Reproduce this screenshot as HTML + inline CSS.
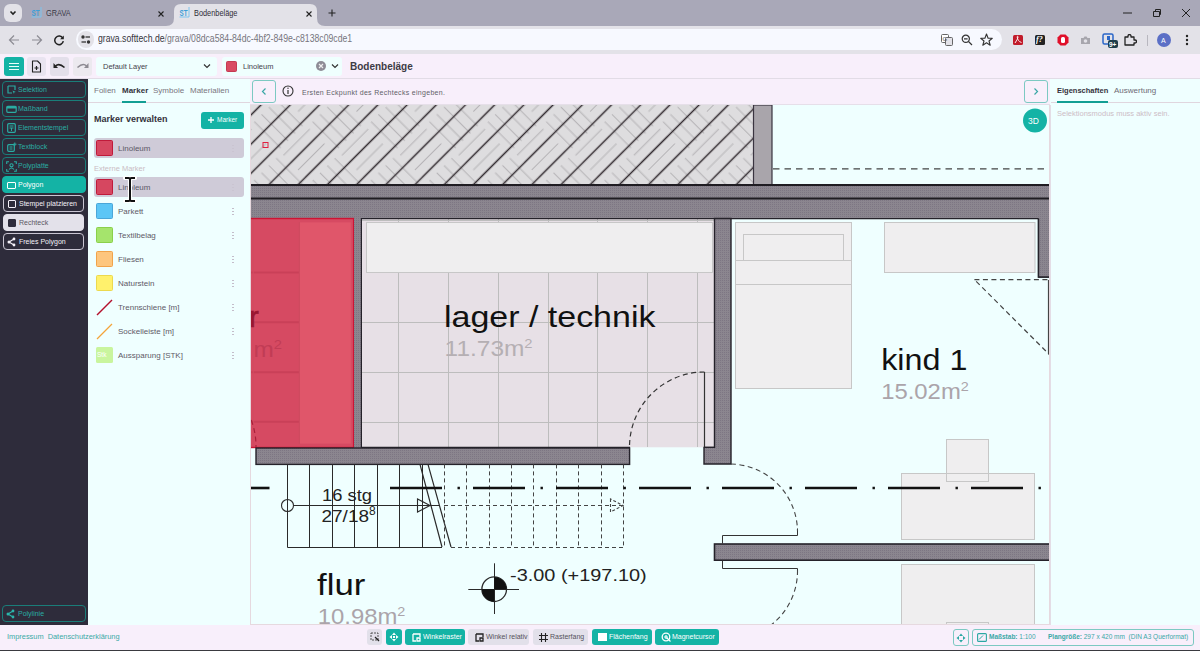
<!DOCTYPE html>
<html><head><meta charset="utf-8">
<style>
*{box-sizing:border-box;margin:0;padding:0}
html,body{width:1200px;height:651px;overflow:hidden;background:#efffff;font-family:"Liberation Sans",sans-serif;position:relative}
.a{position:absolute}
.t{position:absolute;white-space:nowrap;line-height:1}
/* chrome */
#tabs{left:0;top:0;width:1200px;height:26px;background:#a9a8b8}
#addr{left:0;top:26px;width:1200px;height:28px;background:#e3e2e8}
#tool{left:0;top:54px;width:1200px;height:25px;background:#f8effb;border-bottom:1px solid #e2dce6}
#side{left:0;top:79px;width:88px;height:546px;background:#2e2c3b}
#panel{left:88px;top:79px;width:162px;height:546px;background:#efffff}
#info{left:250px;top:79px;width:800px;height:26px;background:#f8effb;border-bottom:1px solid #e6dfe9}
#right{left:1050px;top:79px;width:150px;height:546px;background:#efffff}
#status{left:0;top:625px;width:1200px;height:25px;background:#f8effb}
#bot{left:0;top:650px;width:1200px;height:1px;background:#3a3a40}
.sb{position:absolute;left:2px;width:84px;height:17px;border:1px solid #1a7d79;border-radius:4px;color:#2aaca3;font-size:7px}
.sb span{position:absolute;left:15px;top:4px;white-space:nowrap}
.sb i{position:absolute;left:4px;top:4px;width:8px;height:8px;border:1.3px solid #2bb5aa;border-radius:1px}
.sub{left:3px;width:81px;border-color:#c9c5d2;color:#f4f0f8}
.sub i{border-color:#f4f0f8}
.row{position:absolute;left:94px;width:150px;height:20px}
.sw{position:absolute;left:2px;top:2px;width:17px;height:16px;border-radius:1.5px}
.row span{position:absolute;left:24px;top:6px;font-size:8px;color:#5e5a66;white-space:nowrap}
.dots{position:absolute;left:138px;top:6px;width:2px;height:9px;background:radial-gradient(circle,#c4bdca 0.75px,transparent 0.95px) 0 0/2px 3px}
.btn{position:absolute;top:629px;height:16px;border-radius:3px;font-size:7px;white-space:nowrap}
.btn span{position:absolute;top:4px}
.teal{background:#14b3a5;color:#fff}
.gray{background:#e2e0ea;color:#55525c}
</style></head><body>
<div id="tabs" class="a"></div>
<div id="addr" class="a"></div>
<div id="tool" class="a"></div>
<div id="side" class="a"></div>
<div id="panel" class="a"></div>
<div id="info" class="a"></div>
<div id="right" class="a"></div>
<div id="status" class="a"></div>
<div id="bot" class="a"></div>





<!-- canvas -->
<svg class="a" style="left:250px;top:105px" width="800" height="520" viewBox="250 105 800 520">
<defs>
<pattern id="pq" patternUnits="userSpaceOnUse" width="82.60" height="82.60" patternTransform="rotate(-45) translate(6,16)">
<rect width="82.60" height="82.60" fill="#dedddf"/>
<path d="M5.16 2.00V39.30M15.49 2.00V39.30M25.81 2.00V39.30M36.14 2.00V39.30M46.46 43.30V80.60M56.79 43.30V80.60M67.11 43.30V80.60M77.44 43.30V80.60M43.30 5.16H80.60M43.30 15.49H80.60M43.30 25.81H80.60M43.30 36.14H80.60M2.00 46.46H39.30M2.00 56.79H39.30M2.00 67.11H39.30M2.00 77.44H39.30" stroke="#b5b3b6" stroke-width="1"/>
</pattern>
<pattern id="dk" patternUnits="userSpaceOnUse" width="41.30" height="20.65" patternTransform="rotate(-45) translate(0,0.635)">
<path d="M-1 10.325H42.30" stroke="#362f34" stroke-width="1.5"/>
</pattern>
<pattern id="wl" patternUnits="userSpaceOnUse" width="2" height="2"><rect width="2" height="2" fill="#8b868f"/><rect width="1" height="1" fill="#7d7683"/></pattern>
</defs>
<!-- hatched top -->
<rect x="250" y="105" width="503.5" height="80" fill="url(#pq)"/><rect x="250" y="105" width="503.5" height="80" fill="url(#dk)"/>
<rect x="753.5" y="105" width="18.5" height="80" fill="#a9a5ab" stroke="#3a3440" stroke-width="1.2"/>
<path d="M773 168.8H1050" stroke="#444" stroke-width="1.3" stroke-dasharray="6.5 5"/>
<!-- top walls -->
<rect x="250" y="185" width="800" height="13" fill="url(#wl)"/>
<rect x="250" y="198.5" width="800" height="19.5" fill="url(#wl)"/>
<path d="M250 185H1050M250 198.5H1050" stroke="#1f1c22" stroke-width="2"/>
<!-- red room -->
<rect x="250" y="218" width="104" height="229.5" fill="#d64a62"/>
<rect x="299.6" y="222.4" width="51.2" height="221.2" fill="#e0566a"/>
<path d="M250 272.5H299M250 322.2H299M250 372.2H299M250 421.8H299" stroke="#c94058" stroke-width="2"/><path d="M253.2 218V447" stroke="#d24a60" stroke-width="1"/><path d="M251.2 420A74 74 0 0 1 256 447" stroke="#a8203a" stroke-width="1.2" fill="none" stroke-dasharray="5 3.5"/>
<path d="M299.3 222V444" stroke="#cc4a5e" stroke-width="1"/>
<rect x="250" y="218.5" width="103.6" height="229" fill="none" stroke="#cc1434" stroke-width="1.4"/>
<text x="249" y="326.8" font-family="Liberation Sans" font-size="29.5" fill="#9a1631" stroke="#9a1631" stroke-width="0.6">r</text>
<text x="253.4" y="356.5" font-family="Liberation Sans" font-size="21.5" fill="#c13c55" textLength="28.5" lengthAdjust="spacingAndGlyphs">m<tspan font-size="13" dy="-8">2</tspan></text>
<!-- wall between red and lager -->
<rect x="354" y="218" width="7.5" height="230" fill="url(#wl)"/>
<path d="M361.5 218V448" stroke="#25222a" stroke-width="1.3"/>
<!-- lager room -->
<rect x="362" y="218.8" width="352" height="228.5" fill="#e7e0e6"/>
<path d="M398.5 219V447M448.5 219V447M498.5 219V447M548.5 219V447M597.5 219V447M647.5 219V447M697.5 219V447M362 322.5H714M362 372.5H714M362 422.5H714M362 220.5H714" stroke="#bdbdbd" stroke-width="1"/>
<rect x="366.5" y="222.5" width="346" height="50" fill="#efeeef" stroke="#c7c7c7" stroke-width="1"/>
<path d="M362 218.6H714M362 447.4H630M704 447.4H714" stroke="#25222a" stroke-width="1.4"/>
<text x="444" y="326.6" font-family="Liberation Sans" font-size="29.5" fill="#111" textLength="211.4" lengthAdjust="spacingAndGlyphs">lager / technik</text>
<text x="444.6" y="356.3" font-family="Liberation Sans" font-size="21.5" fill="#b5afb3" textLength="88" lengthAdjust="spacingAndGlyphs">11.73m<tspan font-size="13" dy="-8">2</tspan></text>
<!-- lager door -->
<path d="M704.5 372V447" stroke="#333" stroke-width="1.2"/>
<path d="M704.5 372A75 75 0 0 0 629.5 447" stroke="#333" stroke-width="1.2" fill="none" stroke-dasharray="5 3.5"/>
<!-- right lager wall -->
<path d="M714.5 218.5H731V464H704V447.4H714.5Z" fill="url(#wl)" stroke="#25222a" stroke-width="1.4"/>
<!-- bottom lager wall -->
<rect x="256" y="448" width="373.6" height="16.4" fill="url(#wl)" stroke="#25222a" stroke-width="1.4"/>
<!-- kind 1 -->
<path d="M731 218.6H1038.5V277H1050" stroke="#25222a" stroke-width="1.4" fill="none"/>
<rect x="1038.5" y="218" width="11.5" height="59" fill="url(#wl)"/>
<path d="M1038.5 218.6V277H1050" stroke="#25222a" stroke-width="1.4" fill="none"/>
<rect x="735.5" y="222.5" width="116" height="166" fill="#efeeef" stroke="#c7c7c7" stroke-width="1"/>
<rect x="743.5" y="234.5" width="100" height="26" fill="#efeeef" stroke="#c7c7c7" stroke-width="1"/>
<path d="M735.5 260.5H851.5M735.5 284.5H851.5" stroke="#c7c7c7" stroke-width="1"/>
<rect x="884.5" y="222.5" width="150.5" height="50" fill="#efeeef" stroke="#c7c7c7" stroke-width="1"/>
<path d="M974.4 279.6H1048.8L1048.8 354Z" stroke="#444" stroke-width="1.2" fill="none" stroke-dasharray="5 3.5"/>
<path d="M1048.5 280V354" stroke="#444" stroke-width="1.2"/>
<text x="881.2" y="370.1" font-family="Liberation Sans" font-size="29.5" fill="#111" textLength="86.2" lengthAdjust="spacingAndGlyphs">kind 1</text>
<text x="881.2" y="399.3" font-family="Liberation Sans" font-size="21.5" fill="#aba4aa" textLength="87.6" lengthAdjust="spacingAndGlyphs">15.02m<tspan font-size="13" dy="-8">2</tspan></text>
<rect x="946.5" y="439.5" width="42" height="42" fill="#efeeef"/>
<rect x="901.5" y="473.5" width="133" height="66" fill="#efeeef" stroke="#c7c7c7" stroke-width="1"/>
<rect x="946.5" y="439.5" width="42" height="42" fill="none" stroke="#c7c7c7" stroke-width="1"/>
<rect x="901.5" y="564.5" width="133" height="70" fill="#efeeef" stroke="#c7c7c7" stroke-width="1"/>
<rect x="946.5" y="622.5" width="42" height="10" fill="#efeeef" stroke="#c7c7c7" stroke-width="1"/>
<!-- horizontal wall bottom right -->
<rect x="714.5" y="544" width="340" height="16.2" fill="url(#wl)" stroke="#25222a" stroke-width="1.6"/>
<path d="M722.5 543.5V535.5H797.5V528.5M722.5 560.5V568.5H797.5V572" stroke="#333" stroke-width="1" fill="none"/>
<path d="M731 464A68 68 0 0 1 797.5 531" stroke="#444" stroke-width="1.1" fill="none" stroke-dasharray="5 3.5"/>
<path d="M797.5 570A68 68 0 0 1 771 625" stroke="#444" stroke-width="1.1" fill="none" stroke-dasharray="5 3.5"/>
<!-- stairs -->
<path d="M287.5 464.4V547.5H442M309.5 464.4V547M332.5 464.4V547M354.5 464.4V547M377.5 464.4V547M399.5 464.4V547M422.5 464.4V547" stroke="#2a2a2a" stroke-width="1" fill="none"/>
<path d="M420 464.4L442 547M428 464.4L451 547" stroke="#2a2a2a" stroke-width="1.2" fill="none"/>
<path d="M444.5 464.4V547M466.5 464.4V547M489.5 464.4V547M511.5 464.4V547M533.5 464.4V547M556.5 464.4V547M578.5 464.4V547M601.5 464.4V547M623.5 464.4V547M451 547.5H623.5M444 505.5H623.5" stroke="#444" stroke-width="1" fill="none" stroke-dasharray="4 3"/>
<path d="M293.5 505.5H440" stroke="#2a2a2a" stroke-width="1"/>
<circle cx="287.5" cy="505.5" r="6" stroke="#2a2a2a" stroke-width="1.1" fill="none"/>
<path d="M417.5 499V512L430 505.5Z" stroke="#2a2a2a" stroke-width="1.1" fill="none"/>
<path d="M610.5 499V512L623 505.5Z" stroke="#444" stroke-width="1.1" fill="none" stroke-dasharray="3 2"/>
<text x="322" y="501" font-family="Liberation Sans" font-size="16" fill="#222" textLength="50" lengthAdjust="spacingAndGlyphs">16 stg</text>
<text x="321.5" y="521.5" font-family="Liberation Sans" font-size="16" fill="#222" textLength="47.5" lengthAdjust="spacingAndGlyphs">27/18</text>
<text x="369" y="515" font-family="Liberation Sans" font-size="12" fill="#222">8</text>
<!-- dash-dot axis -->
<path d="M250 488H269.5" stroke="#111" stroke-width="2.6"/><path d="M390 488H1050" stroke="#111" stroke-width="2.6" stroke-dasharray="52 15.5 2.4 13.1"/>
<!-- elevation -->
<path d="M468.3 589.5H519M494.5 563.3V614" stroke="#2a2a2a" stroke-width="1"/>
<circle cx="494.2" cy="589.2" r="12.3" stroke="#2a2a2a" stroke-width="1.3" fill="none"/>
<path d="M494.2 589.2V576.9A12.3 12.3 0 0 1 506.5 589.2Z M494.2 589.2V601.5A12.3 12.3 0 0 1 481.9 589.2Z" fill="#111"/>
<text x="510" y="580.8" font-family="Liberation Sans" font-size="16.5" fill="#222" textLength="136.7" lengthAdjust="spacingAndGlyphs">-3.00 (+197.10)</text>
<text x="317" y="594.5" font-family="Liberation Sans" font-size="29.5" fill="#111" textLength="48.3" lengthAdjust="spacingAndGlyphs">flur</text>
<text x="317.7" y="623.9" font-family="Liberation Sans" font-size="21.5" fill="#aba4aa" textLength="87.7" lengthAdjust="spacingAndGlyphs">10.98m<tspan font-size="13" dy="-8">2</tspan></text>
<!-- small red marker -->
<rect x="263" y="142.5" width="5" height="5" fill="none" stroke="#e02040" stroke-width="1"/>
<!-- canvas border -->
<path d="M1049.5 105V625M250 624.5H1050M250.5 105V625" stroke="#e6d9df" stroke-width="1"/>
<!-- 3D button -->
<circle cx="1035" cy="120.4" r="12" fill="#14b3a5"/>
<text x="1028" y="124" font-family="Liberation Sans" font-size="8.5" fill="#fff">3D</text>
</svg>

<!-- info bar -->
<div class="a" style="left:252px;top:80px;width:24px;height:23px;border-radius:3px;border:1px solid #7cc9c2;background:#f8effb"></div>
<svg class="a" style="left:260px;top:87px" width="8" height="9"><path d="M5.5 1.5L2.5 4.5L5.5 7.5" stroke="#3aa7a6" stroke-width="1.2" fill="none"/></svg>
<svg class="a" style="left:282px;top:85px" width="12" height="12"><circle cx="6" cy="6" r="5" stroke="#333" stroke-width="1.1" fill="none"/><path d="M6 5V9" stroke="#333" stroke-width="1.2"/><circle cx="6" cy="3.3" r="0.7" fill="#333"/></svg>
<div class="t" style="left:302px;top:89px;font-size:7px;letter-spacing:0.3px;color:#625f69">Ersten Eckpunkt des Rechtecks eingeben.</div>
<div class="a" style="left:1024px;top:80px;width:24px;height:23px;border-radius:3px;border:1px solid #7cc9c2;background:#f8effb"></div>
<svg class="a" style="left:1032px;top:87px" width="8" height="9"><path d="M2.5 1.5L5.5 4.5L2.5 7.5" stroke="#3aa7a6" stroke-width="1.2" fill="none"/></svg>
<!-- right panel -->
<div class="a" style="left:1050px;top:105px;width:1px;height:520px;background:#e4dde6"></div>
<div class="t" style="left:1057px;top:87px;font-size:7.5px;color:#35323c;font-weight:bold">Eigenschaften</div>
<div class="t" style="left:1114px;top:87px;font-size:8px;color:#6e6a75">Auswertung</div>
<div class="a" style="left:1051px;top:102px;width:149px;height:1px;background:#e0d6de"></div>
<div class="a" style="left:1057px;top:101px;width:51px;height:2px;background:#139e93"></div>
<div class="t" style="left:1057px;top:110px;font-size:7.5px;color:#cdbdc6">Selektionsmodus muss aktiv sein.</div>
<!-- status bar -->
<div class="t" style="left:7px;top:633px;font-size:7.4px;color:#3aaaa6">Impressum&nbsp; Datenschutzerklärung</div>
<div class="btn gray" style="left:367px;width:15px"><svg class="a" style="left:3px;top:3px" width="10" height="10"><path d="M1 1H8V8H1Z" stroke="#444" stroke-width="0.9" fill="none" stroke-dasharray="2 1"/><path d="M5 5L9 9" stroke="#222" stroke-width="1.2"/></svg></div>
<div class="btn teal" style="left:386px;width:16px"><svg class="a" style="left:3px;top:3px" width="10" height="10"><path d="M5 0.5L7 3H3Z M5 9.5L7 7H3Z M0.5 5L3 3V7Z M9.5 5L7 3V7Z" fill="#fff"/><rect x="4" y="4" width="2" height="2" fill="#fff"/></svg></div>
<div class="btn teal" style="left:405px;width:60px"><svg class="a" style="left:7px;top:4px" width="9" height="9"><path d="M1 1H8V4M1 1V8H4M5 5H8V8H5Z" stroke="#fff" stroke-width="1.3" fill="none"/></svg><span style="left:18px">Winkelraster</span></div>
<div class="btn gray" style="left:468px;width:61px"><svg class="a" style="left:7px;top:4px" width="9" height="9"><path d="M1 1H8V4M1 1V8H4M5 5H8V8H5Z" stroke="#222" stroke-width="1.3" fill="none"/></svg><span style="left:18px">Winkel relativ</span></div>
<div class="btn gray" style="left:533px;width:55px"><svg class="a" style="left:6px;top:4px" width="9" height="9"><path d="M0 2.5H9M0 6.5H9M2.5 0V9M6.5 0V9" stroke="#222" stroke-width="1.1"/></svg><span style="left:17px">Rasterfang</span></div>
<div class="btn teal" style="left:592px;width:60px"><div class="a" style="left:6px;top:4px;width:9px;height:8px;background:#fff"></div><span style="left:17px">Flächenfang</span></div>
<div class="btn teal" style="left:655px;width:64px"><svg class="a" style="left:6px;top:3px" width="10" height="10"><circle cx="5" cy="5" r="3.8" stroke="#fff" stroke-width="1.3" fill="none"/><path d="M5 3V7M3 5H7M6 6L9.5 9.5" stroke="#fff" stroke-width="1.2"/></svg><span style="left:17px">Magnetcursor</span></div>
<div class="a" style="left:953px;top:629px;width:16px;height:17px;border-radius:3px;border:1px solid #7cc9c2"></div>
<svg class="a" style="left:956px;top:633px" width="10" height="10"><path d="M5 0.5L7 3H3Z M5 9.5L7 7H3Z M0.5 5L3 3V7Z M9.5 5L7 3V7Z" fill="#2aa8a3"/></svg>
<div class="a" style="left:972px;top:629px;width:222px;height:17px;border-radius:3px;border:1px solid #7cc9c2"></div>
<svg class="a" style="left:977px;top:633px" width="10" height="9"><rect x="0.6" y="0.6" width="8.8" height="7.8" rx="1" stroke="#2aa8a3" stroke-width="1.1" fill="none"/><path d="M2 6.5L6 2.5" stroke="#2aa8a3" stroke-width="1"/></svg>
<div class="t" style="left:989px;top:634px;font-size:6.5px;color:#3aa8a6"><b>Maßstab:</b>&nbsp;1:100</div>
<div class="t" style="left:1048px;top:634px;font-size:6.5px;color:#3aa8a6"><b>Plangröße:</b>&nbsp;297 x 420 mm&nbsp; (DIN A3 Querformat)</div>

<!-- sidebar -->
<div class="sb" style="top:81px"><svg class="a" style="left:4px;top:3px" width="10" height="10"><path d="M1 1H8V5M1 1V8H5" stroke="#2aaca3" stroke-width="1.2" fill="none"/><path d="M5.5 5.5L9 7L7.3 7.3L7 9Z" fill="#2aaca3"/></svg><span>Selektion</span></div>
<div class="sb" style="top:100px"><svg class="a" style="left:3px;top:4px" width="11" height="9"><rect x="0.8" y="1.3" width="9.4" height="6" rx="1" stroke="#2aaca3" stroke-width="1.2" fill="none"/><rect x="0.8" y="1.3" width="9.4" height="2.2" fill="#2aaca3"/></svg><span>Maßband</span></div>
<div class="sb" style="top:119px"><svg class="a" style="left:4px;top:3px" width="10" height="10"><rect x="0.7" y="0.7" width="7.6" height="8.6" rx="1" stroke="#2aaca3" stroke-width="1.2" fill="none"/><path d="M2.5 3H6.5M2.5 5H6.5M4.5 5V8" stroke="#2aaca3" stroke-width="1"/></svg><span>Elementstempel</span></div>
<div class="sb" style="top:138px"><svg class="a" style="left:4px;top:3px" width="10" height="10"><rect x="0.7" y="2.7" width="6.6" height="6.6" rx="1" stroke="#2aaca3" stroke-width="1.2" fill="none"/><path d="M2.5 5H5.5M2.5 7H5.5M7.8 0.5V4M6 2.2H9.5" stroke="#2aaca3" stroke-width="1"/></svg><span>Textblock</span></div>
<div class="sb" style="top:157px"><svg class="a" style="left:3px;top:3px" width="11" height="11"><path d="M0.7 3V0.7H3M8 0.7H10.3V3M10.3 8V10.3H8M3 10.3H0.7V8" stroke="#2aaca3" stroke-width="1.1" fill="none"/><circle cx="5.5" cy="4.3" r="1.6" stroke="#2aaca3" stroke-width="1.1" fill="none"/><path d="M3 8.5Q5.5 5.5 8 8.5" stroke="#2aaca3" stroke-width="1.1" fill="none"/></svg><span>Polyplatte</span></div>
<div class="sb" style="top:176px;background:#14b3a5;border-color:#14b3a5;color:#fff"><i style="border-color:#fff;width:9px;height:7px;top:5px"></i><span>Polygon</span></div>
<div class="sb sub" style="top:195px"><i style="width:8px;height:8px"></i><span>Stempel platzieren</span></div>
<div class="sb sub" style="top:214px;background:#e3e1ea;border-color:#e3e1ea;color:#5b5864"><i style="background:#2e2c3b;border-color:#2e2c3b"></i><span>Rechteck</span></div>
<div class="sb sub" style="top:233px"><svg class="a" style="left:3px;top:3px" width="9" height="10"><path d="M2 5L7 2M2 5L7 8" stroke="#f4f0f8" stroke-width="1.2"/><circle cx="2" cy="5" r="1.5" fill="#f4f0f8"/><circle cx="7" cy="2" r="1.4" fill="#f4f0f8"/><circle cx="7" cy="8" r="1.4" fill="#f4f0f8"/></svg><span>Freies Polygon</span></div>
<div class="sb" style="top:605px"><svg class="a" style="left:3px;top:3px" width="9" height="10"><path d="M2 5L7 2M2 5L7 8" stroke="#2bb5aa" stroke-width="1.2"/><circle cx="2" cy="5" r="1.5" fill="#2bb5aa"/><circle cx="7" cy="2" r="1.4" fill="#2bb5aa"/><circle cx="7" cy="8" r="1.4" fill="#2bb5aa"/></svg><span>Polylinie</span></div>
<!-- panel -->
<div class="t" style="left:94px;top:87px;font-size:8px;color:#7a7680">Folien</div>
<div class="t" style="left:122px;top:87px;font-size:8px;color:#35323c;font-weight:bold">Marker</div>
<div class="t" style="left:153px;top:87px;font-size:8px;color:#7a7680">Symbole</div>
<div class="t" style="left:190px;top:87px;font-size:8px;color:#7a7680">Materialien</div>
<div class="a" style="left:88px;top:102px;width:162px;height:1px;background:#e0d6de"></div>
<div class="a" style="left:122px;top:101px;width:24px;height:2px;background:#139e93"></div>
<div class="t" style="left:94px;top:115px;font-size:9px;color:#35323c;font-weight:bold">Marker verwalten</div>
<div class="a" style="left:201px;top:112px;width:43px;height:17px;border-radius:3px;background:#14b3a5"></div>
<svg class="a" style="left:207px;top:116px" width="8" height="8"><path d="M4 1V7M1 4H7" stroke="#fff" stroke-width="1.3"/></svg>
<div class="t" style="left:217px;top:117px;font-size:6.5px;color:#f4fffd">Marker</div>
<div class="row" style="top:138px;background:#cfcbd8;border-radius:3px"><div class="sw" style="background:#d64760;border:1px solid #c01a3a"></div><span style="color:#5c5866">Linoleum</span><div class="dots" style="opacity:.5"></div></div>
<div class="t" style="left:94px;top:165px;font-size:7.5px;color:#cbbcc4">Externe Marker</div>
<div class="row" style="top:177px;background:#cfcbd8;border-radius:3px"><div class="sw" style="background:#d64760;border:1px solid #c01a3a"></div><span style="color:#5c5866">Linoleum</span><div class="dots" style="opacity:.5"></div></div>
<div class="row" style="top:201px"><div class="sw" style="background:#5cc6f6;border:1px solid #4aa6d8"></div><span>Parkett</span><div class="dots"></div></div>
<div class="row" style="top:225px"><div class="sw" style="background:#a5e46c;border:1px solid #8ad04a"></div><span>Textilbelag</span><div class="dots"></div></div>
<div class="row" style="top:249px"><div class="sw" style="background:#fdc67e;border:1px solid #f1a34a"></div><span>Fliesen</span><div class="dots"></div></div>
<div class="row" style="top:273px"><div class="sw" style="background:#fff16c;border:1px solid #ecd94e"></div><span>Naturstein</span><div class="dots"></div></div>
<div class="row" style="top:297px"><svg class="a" style="left:2px;top:2px" width="17" height="17"><path d="M1 16L16 1" stroke="#b3102c" stroke-width="1.5"/></svg><span>Trennschiene [m]</span><div class="dots"></div></div>
<div class="row" style="top:321px"><svg class="a" style="left:2px;top:2px" width="17" height="17"><path d="M1 16L16 1" stroke="#f4a43a" stroke-width="1.3"/></svg><span>Sockelleiste [m]</span><div class="dots"></div></div>
<div class="row" style="top:345px"><div class="sw" style="background:#c9f59e"></div><div class="t" style="left:3px;top:7px;font-size:6.5px;color:#fff">Stk</div><span>Aussparung [STK]</span><div class="dots"></div></div>
<svg class="a" style="left:122px;top:175px" width="16" height="29"><path d="M3 3H6.5Q8 3 8 4.5Q8 3 9.5 3H13M8 4.5V24.5M3 26H6.5Q8 26 8 24.5Q8 26 9.5 26H13" stroke="#fff" stroke-width="4.2" fill="none" stroke-linecap="round"/><path d="M3 3H6.5Q8 3 8 4.5Q8 3 9.5 3H13M8 4.5V24.5M3 26H6.5Q8 26 8 24.5Q8 26 9.5 26H13" stroke="#111" stroke-width="2" fill="none"/></svg>

<!-- app toolbar -->
<div class="a" style="left:4px;top:57px;width:20px;height:19px;border-radius:3px;background:#14b3a5"></div>
<svg class="a" style="left:8px;top:62px" width="12" height="9"><path d="M1 1.5H11M1 4.5H11M1 7.5H11" stroke="#e8fffb" stroke-width="1.1"/></svg>
<div class="a" style="left:27px;top:57px;width:19px;height:19px;border-radius:3px;background:#e9e4f0"></div>
<svg class="a" style="left:31px;top:60px" width="11" height="13"><path d="M1.5 1H6.5L9.5 4V12H1.5Z" stroke="#222" stroke-width="1.1" fill="none" stroke-linejoin="round"/><path d="M5.5 6V10M3.5 8H7.5" stroke="#222" stroke-width="1.2"/></svg>
<div class="a" style="left:50px;top:57px;width:19px;height:19px;border-radius:3px;background:#e3dfea"></div>
<svg class="a" style="left:53px;top:61px" width="13" height="10"><path d="M2.5 5Q6 1.5 11.5 6.5" stroke="#222" stroke-width="1.6" fill="none"/><path d="M0.5 2V7H5Z" fill="#222"/></svg>
<div class="a" style="left:73px;top:57px;width:19px;height:19px;border-radius:3px;background:#ece9ef"></div>
<svg class="a" style="left:76px;top:61px" width="13" height="10"><path d="M10.5 5Q7 1.5 1.5 6.5" stroke="#8d8a92" stroke-width="1.5" fill="none"/><path d="M12.5 2V7H8Z" fill="#8d8a92"/></svg>
<div class="a" style="left:96px;top:57px;width:121px;height:19px;border-radius:3px;background:#effffe"></div>
<div class="t" style="left:103px;top:63px;font-size:7.5px;color:#45424d">Default Layer</div>
<svg class="a" style="left:203px;top:63px" width="8" height="6"><path d="M1 1.5L4 4.5L7 1.5" stroke="#333" stroke-width="1.2" fill="none"/></svg>
<div class="a" style="left:222px;top:57px;width:120px;height:19px;border-radius:3px;background:#effffe"></div>
<div class="a" style="left:226px;top:61px;width:11px;height:11px;border-radius:1.5px;background:#d94a62;border:1px solid #c43a52"></div>
<div class="t" style="left:243px;top:63px;font-size:7.5px;color:#45424d">Linoleum</div>
<div class="a" style="left:316px;top:61px;width:10px;height:10px;border-radius:5px;background:#8e8c96"></div>
<svg class="a" style="left:316px;top:61px" width="10" height="10"><path d="M3 3L7 7M7 3L3 7" stroke="#eee" stroke-width="1.2"/></svg>
<svg class="a" style="left:331px;top:63px" width="8" height="6"><path d="M1 1.5L4 4.5L7 1.5" stroke="#333" stroke-width="1.2" fill="none"/></svg>
<div class="t" style="left:350px;top:62px;font-size:10px;font-weight:bold;color:#3d3a45">Bodenbeläge</div>

<!-- tab strip -->
<div class="a" style="left:4px;top:4px;width:18px;height:18px;border-radius:6px;background:#e3e2e8"></div>
<svg class="a" style="left:8px;top:9px" width="10" height="8"><path d="M2.5 2.5 L5 5 L7.5 2.5" stroke="#222" stroke-width="1.6" fill="none"/></svg>
<svg class="a" style="left:31px;top:6px" width="11" height="12"><text x="0.5" y="9.5" font-family="Liberation Sans" font-size="9.5" fill="#3b9fd9" font-weight="bold" textLength="8" lengthAdjust="spacingAndGlyphs">ST</text><path d="M10 1V11H0.5" stroke="#7cc4ee" stroke-width="1" fill="none"/></svg>
<div class="t" style="left:45.5px;top:10.2px;font-size:8.2px;color:#3a3946;transform:scaleX(0.9);transform-origin:0 0">GRAVA</div>
<svg class="a" style="left:157px;top:10px" width="8" height="8"><path d="M1.5 1.5L6.5 6.5M6.5 1.5L1.5 6.5" stroke="#222" stroke-width="1.1"/></svg>
<svg class="a" style="left:166px;top:3px" width="166" height="24"><path d="M0 23 Q8 23 8 15 L8 8 Q8 1 15 1 L144 1 Q151 1 151 8 L151 15 Q151 23 159 23 L166 23 L166 24 L0 24 Z" fill="#e3e2e8"/></svg>
<svg class="a" style="left:179px;top:6px" width="11" height="12"><text x="0.5" y="9.5" font-family="Liberation Sans" font-size="9.5" fill="#3b9fd9" font-weight="bold" textLength="8" lengthAdjust="spacingAndGlyphs">ST</text><path d="M10 1V11H0.5" stroke="#7cc4ee" stroke-width="1" fill="none"/></svg>
<div class="t" style="left:194px;top:10.2px;font-size:8.2px;color:#2f2e38;transform:scaleX(0.9);transform-origin:0 0">Bodenbeläge</div>
<svg class="a" style="left:305px;top:10px" width="8" height="8"><path d="M1.5 1.5L6.5 6.5M6.5 1.5L1.5 6.5" stroke="#222" stroke-width="1.1"/></svg>
<svg class="a" style="left:327px;top:8px" width="10" height="10"><path d="M5 1.5V8.5M1.5 5H8.5" stroke="#222" stroke-width="1.1"/></svg>
<svg class="a" style="left:1123px;top:12px" width="10" height="3"><path d="M0 1H9" stroke="#222" stroke-width="1"/></svg>
<svg class="a" style="left:1152px;top:8px" width="10" height="10"><path d="M1.5 3.5H7.5V8.5H1.5Z M3.5 3.5V1.5H8.5V6.5H7.5" stroke="#222" stroke-width="1" fill="none"/></svg>
<svg class="a" style="left:1181px;top:8px" width="10" height="10"><path d="M1 1L9 9M9 1L1 9" stroke="#222" stroke-width="1"/></svg>
<!-- address row -->
<svg class="a" style="left:8px;top:34px" width="12" height="12"><path d="M11 6H1.5M6 1.5L1.5 6L6 10.5" stroke="#8d8c94" stroke-width="1.2" fill="none"/></svg>
<svg class="a" style="left:31px;top:34px" width="12" height="12"><path d="M1 6H10.5M6 1.5L10.5 6L6 10.5" stroke="#8d8c94" stroke-width="1.2" fill="none"/></svg>
<svg class="a" style="left:53px;top:34px" width="12" height="12"><path d="M9.8 4.2A4.3 4.3 0 1 0 10.3 7.2" stroke="#222" stroke-width="1.5" fill="none"/><path d="M10.8 1.5V5.2H7.1Z" fill="#222"/></svg>
<div class="a" style="left:76px;top:29px;width:926px;height:21px;border-radius:11px;background:#f7f9ff"></div>
<div class="a" style="left:78px;top:31px;width:16px;height:17px;border-radius:9px;background:#e3e2e8"></div>
<svg class="a" style="left:80px;top:34px" width="12" height="11"><circle cx="3" cy="3" r="1.7" fill="#333"/><path d="M5.5 3H10" stroke="#333" stroke-width="1.3"/><circle cx="8.5" cy="8" r="1.7" fill="#333"/><path d="M1.5 8H6" stroke="#333" stroke-width="1.3"/></svg>
<div class="t" style="left:98px;top:33.3px;font-size:10.5px;color:#35343c;transform:scaleX(0.826);transform-origin:0 0">grava.softtech.de<span style="color:#76757d">/grava/08dca584-84dc-4bf2-849e-c8138c09cde1</span></div>
<svg class="a" style="left:941px;top:34px" width="12" height="12"><rect x="0.5" y="0.5" width="7" height="8" rx="1" fill="#fff" stroke="#666"/><rect x="4.5" y="3.5" width="7" height="8" rx="1" fill="#e3e2e8" stroke="#666"/><text x="1.5" y="7" font-size="6" fill="#555" font-family="Liberation Sans">G</text></svg>
<svg class="a" style="left:961px;top:34px" width="12" height="12"><circle cx="4.8" cy="4.8" r="3.6" stroke="#333" stroke-width="1.2" fill="none"/><path d="M7.5 7.5L11 11M3 4.8H6.6" stroke="#333" stroke-width="1.2"/></svg>
<svg class="a" style="left:980px;top:33px" width="13" height="13"><path d="M6.5 1L8.1 5.2L12.3 5.3L9 8L10.2 12.2L6.5 9.8L2.8 12.2L4 8L0.7 5.3L4.9 5.2Z" stroke="#333" stroke-width="1.1" fill="none" stroke-linejoin="round"/></svg>
<div class="a" style="left:1013px;top:35px;width:10px;height:10px;border-radius:1.5px;background:#c11b2a"></div>
<svg class="a" style="left:1013px;top:35px" width="10" height="10"><path d="M2 8C4 5 5 3 5 2C5 1 4.2 1 4.2 2C4.2 4 6 7 8.5 7.5" stroke="#fff" stroke-width="0.9" fill="none"/></svg>
<div class="a" style="left:1035px;top:35px;width:10px;height:10px;border-radius:1.5px;background:#222"></div>
<div class="t" style="left:1036px;top:36px;font-size:8px;color:#fff;font-style:italic;font-weight:bold;font-family:'Liberation Serif'">f?</div>
<svg class="a" style="left:1057px;top:34px" width="12" height="12"><path d="M3.5 0.5H8.5L11.5 3.5V8.5L8.5 11.5H3.5L0.5 8.5V3.5Z" fill="#e0102a"/><rect x="4" y="3" width="4" height="6" rx="1.5" fill="#fff"/></svg>
<svg class="a" style="left:1080px;top:35px" width="11" height="10"><path d="M1 3H3.5L4.5 1.5H6.5L7.5 3H10V9H1Z" fill="#a7a6ad"/><circle cx="5.5" cy="6" r="1.8" fill="#e3e2e8"/></svg>
<svg class="a" style="left:1102px;top:33px" width="16" height="15"><rect x="1" y="1" width="10" height="10" rx="1.5" fill="none" stroke="#2a66c8" stroke-width="1.5"/><rect x="5" y="3" width="3" height="4" fill="#2a66c8"/><rect x="6" y="7" width="10" height="8" rx="2" fill="#1d3c4a"/><text x="7" y="13.5" font-size="6.5" fill="#fff" font-family="Liberation Sans" font-weight="bold">9+</text></svg>
<svg class="a" style="left:1124px;top:34px" width="13" height="12"><path d="M1 3H4V2A1.5 1.5 0 0 1 7 2V3H10V6H11A1.5 1.5 0 0 1 11 9H10V11H1Z" stroke="#222" stroke-width="1.3" fill="none" stroke-linejoin="round"/></svg>
<div class="a" style="left:1147px;top:35px;width:1px;height:11px;background:#b8b7bf"></div>
<div class="a" style="left:1157px;top:33px;width:14px;height:14px;border-radius:7px;background:#5b6fc6"></div>
<div class="t" style="left:1161px;top:37px;font-size:7px;color:#fff">A</div>
<svg class="a" style="left:1185px;top:34px" width="4" height="12"><circle cx="2" cy="2" r="1.2" fill="#222"/><circle cx="2" cy="6" r="1.2" fill="#222"/><circle cx="2" cy="10" r="1.2" fill="#222"/></svg>

</body></html>
